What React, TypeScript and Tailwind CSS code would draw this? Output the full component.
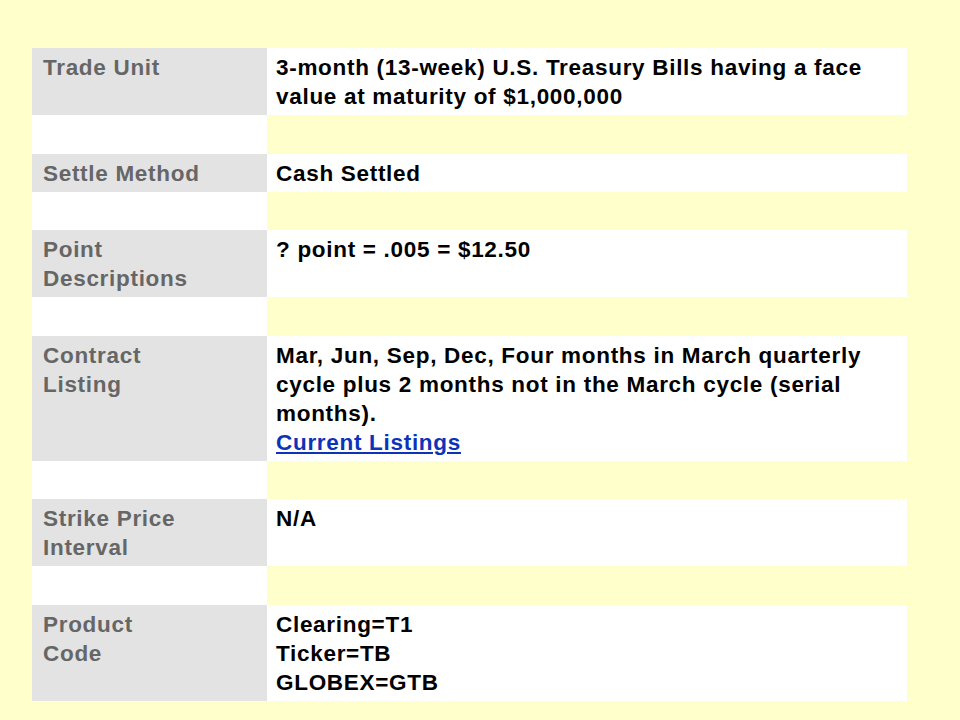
import React from "react";

type Row = { label: React.ReactNode; value: React.ReactNode };

const rows: Row[] = [
  {
    label: "Trade Unit",
    value: (
      <>
        3-month (13-week) U.S. Treasury Bills having a face
        <br />
        value at maturity of $1,000,000
      </>
    ),
  },
  { label: "Settle Method", value: "Cash Settled" },
  {
    label: (
      <>
        Point
        <br />
        Descriptions
      </>
    ),
    value: "? point = .005 = $12.50",
  },
  {
    label: (
      <>
        Contract
        <br />
        Listing
      </>
    ),
    value: (
      <>
        Mar, Jun, Sep, Dec, Four months in March quarterly
        <br />
        cycle plus 2 months not in the March cycle (serial
        <br />
        months).
        <br />
        <a href="#" className="text-[#0c33b8] underline underline-offset-2">
          Current Listings
        </a>
      </>
    ),
  },
  {
    label: (
      <>
        Strike Price
        <br />
        Interval
      </>
    ),
    value: "N/A",
  },
  {
    label: (
      <>
        Product
        <br />
        Code
      </>
    ),
    value: (
      <>
        Clearing=T1
        <br />
        Ticker=TB
        <br />
        GLOBEX=GTB
      </>
    ),
  },
];

export default function App() {
  return (
    <div
      className="w-[960px] h-[720px] bg-[#ffffcc] pt-[48px] pl-[32px] overflow-hidden"
      style={{ fontFamily: '"Liberation Sans", Arial, sans-serif' }}
    >
      <div className="grid grid-cols-[235px_640px] w-[875px] text-[22.5px] leading-[29px] tracking-[0.7px] font-bold">
        {rows.map((row, i) => (
          <React.Fragment key={i}>
            {i > 0 && (
              <>
                <div className="bg-white h-[38.6px]" />
                <div className="bg-[#ffffcc] h-[38.6px]" />
              </>
            )}
            <div className="bg-[#e3e3e3] text-[#666666] pl-[11px] pr-2 pt-[5px] pb-[4px] whitespace-nowrap">
              {row.label}
            </div>
            <div className="bg-white text-black pl-[9px] pr-2 pt-[5px] pb-[4px] whitespace-nowrap">
              {row.value}
            </div>
          </React.Fragment>
        ))}
      </div>
    </div>
  );
}
